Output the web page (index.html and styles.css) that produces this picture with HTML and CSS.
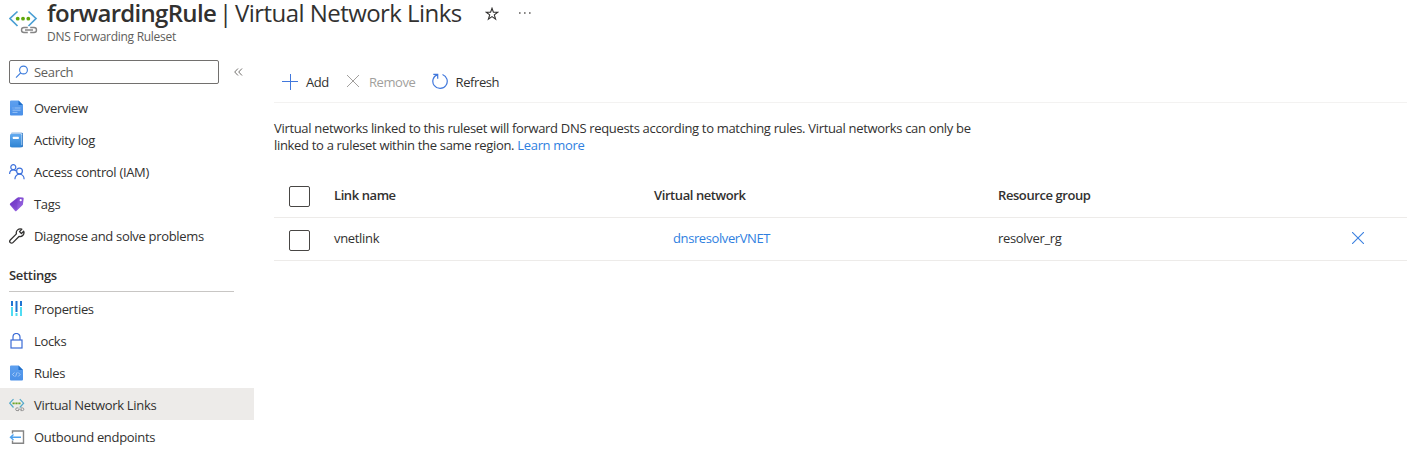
FILE: index.html
```html
<!DOCTYPE html>
<html lang="en">
<head>
<meta charset="utf-8">
<title>forwardingRule | Virtual Network Links</title>
<link rel="stylesheet" href="styles.css">
</head>
<body>
<svg class="defs" aria-hidden="true">
  <defs>
    <linearGradient id="blue" x1="0" y1="0" x2="0" y2="1"><stop offset="0" stop-color="#5ea0ef"/><stop offset="1" stop-color="#4a90e8"/></linearGradient>
    <linearGradient id="book" x1="0" y1="0" x2="0" y2="1"><stop offset="0" stop-color="#62aaf0"/><stop offset="1" stop-color="#2f84d3"/></linearGradient>
    <linearGradient id="purple" x1="0" y1="0" x2="1" y2="1"><stop offset="0" stop-color="#6a2fc4"/><stop offset="1" stop-color="#a272e6"/></linearGradient>
  </defs>
</svg>
<header class="header">
  <svg class="header-icon" width="30" height="26" viewBox="0 0 30 26" fill="none">
    <path d="M8.500 1.500 1 8.500 8.500 16M19.500 1.500l7.500 7-7.500 7.500" stroke="#4a9fd4" stroke-width="1.700"/>
    <g fill="#5ea70b"><circle cx="8.700" cy="8.700" r="1.900"/><circle cx="14" cy="8.700" r="1.900"/><circle cx="19.300" cy="8.700" r="1.900"/></g>
    <path d="M18.500 17.500H15a2.500 2.500 0 0 0 0 5h3.500M21.500 17.500H25a2.500 2.500 0 0 1 0 5h-3.500M16 20h8" stroke="#fff" stroke-width="3"/>
    <path d="M18.800 17.500H15a2.500 2.500 0 0 0 0 5h3.800M21.200 17.500H25a2.500 2.500 0 0 1 0 5h-3.800M16 20h8" stroke="#858585" stroke-width="1.400"/>
  </svg>
  <div class="heading">
    <h1 class="title"><span class="title-name">forwardingRule</span><span class="title-bar">|</span><span class="title-page">Virtual Network Links</span></h1>
    <p class="subtitle">DNS Forwarding Ruleset</p>
  </div>
  <svg class="star" width="14" height="14" viewBox="0 0 14 14" fill="none" stroke="#323130" stroke-width="1.100"><path d="M7 1.300 8.400 5.300h4.300L9.300 7.900l1.300 4.300L7 9.600l-3.600 2.600 1.300-4.300L1.300 5.300h4.300z"/></svg>
  <svg class="more" width="12" height="2" viewBox="0 0 12 2" fill="#605e5c"><path d="M0 .3h1.600v1.400H0zM5 .3h1.600v1.400H5zM10 .3h1.600v1.400H10z"/></svg>
</header>
<div class="layout">
  <aside class="sidebar">
    <div class="search-row">
      <div class="search">
        <svg width="14" height="14" viewBox="0 0 14 14" fill="none" stroke="#3b7bdc" stroke-width="1.100"><circle cx="8.500" cy="5" r="3.900"/><path d="M5.700 7.800 1 12.700"/></svg>
        <span>Search</span>
      </div>
      <svg class="collapse" width="9" height="8" viewBox="0 0 9 8" fill="none" stroke="#706e6c"><path d="M4 .5.700 4 4 7.500M8 .5 4.700 4 8 7.500"/></svg>
    </div>
    <nav class="nav">
      <a class="item"><svg width="16" height="16" viewBox="0 0 16 16"><path d="M1 1.500a1 1 0 0 1 1-1h7.500L14 5v9.500a1 1 0 0 1-1 1H2a1 1 0 0 1-1-1z" fill="url(#blue)"/><path d="M9.500.500V5H14z" fill="#1f6fc9"/><path d="M3.500 8h1M5.500 8h6M3.500 10.200h8M3.500 12.400h5" stroke="#a9cdf8" stroke-width=".8"/></svg><span>Overview</span></a>
      <a class="item"><svg width="16" height="16" viewBox="0 0 16 16"><path d="M2.500.7h10.300a1.300 1.300 0 0 1 1.200 1.300v12a1.300 1.300 0 0 1-1.200 1.300H2.500z" fill="#2c75c4"/><path d="M2.500 1.300h9.700a1 1 0 0 1 1 1v11H2.500z" fill="#d6e8fa"/><rect x="1" y="2" width="11.500" height="13.200" rx="1.300" fill="url(#book)"/><rect x="3.800" y="4.700" width="6" height="2.300" rx=".5" fill="#fff"/></svg><span>Activity log</span></a>
      <a class="item"><svg width="16" height="16" viewBox="0 0 16 16" fill="none" stroke="#3e72dc" stroke-width="1.200"><circle cx="4.300" cy="3.200" r="2.500"/><circle cx="10.500" cy="7" r="2.900"/><path d="M.6 10c0-2.500 1.400-4.100 3.700-4.100 1.200 0 2 .4 2.700 1.100M5.900 15.300c0-3 1.900-5.200 4.600-5.200s4.600 2.200 4.600 5.200"/></svg><span>Access control (IAM)</span></a>
      <a class="item"><svg width="16" height="16" viewBox="0 0 16 16"><path d="M9.200 1.300 1.200 7.500a1 1 0 0 0-.1 1.400l5 6a1 1 0 0 0 1.300.1l6.500-6.300.8-6.200a1 1 0 0 0-1-1z" fill="url(#purple)"/><path d="m8.500 1.300-7.300 6.200L7 14l1.200-1z" fill="#6e35c4" opacity=".35"/><circle cx="11.700" cy="4.200" r="1.100" fill="#fff"/></svg><span>Tags</span></a>
      <a class="item"><svg width="16" height="16" viewBox="0 0 16 16" fill="none" stroke="#323130" stroke-width="1.300" stroke-linejoin="round"><path d="M12.800 1.200a4 4 0 0 0-5.400 4.700L1.300 12a1.800 1.800 0 0 0 2.600 2.600L10 8.500a4 4 0 0 0 4.700-5.300l-2.300 2.300-1.900-1.900z"/></svg><span>Diagnose and solve problems</span></a>
      <h2 class="section">Settings</h2>
      <a class="item"><svg width="16" height="16" viewBox="0 0 16 16"><path d="M2 0h2v5H2zM6.500 0h2v11h-2zM11 0h2v5h-2z" fill="#1f74d2"/><path d="M2 6h2v9H2zM6.500 12h2v3h-2zM11 6h2v9h-2z" fill="#50dcf2"/></svg><span>Properties</span></a>
      <a class="item"><svg width="16" height="16" viewBox="0 0 16 16" fill="none" stroke="#3b6bd6" stroke-width="1.200"><rect x="2" y="7" width="11" height="8"/><path d="M4 7V4a3.500 3.500 0 0 1 7 0v3"/></svg><span>Locks</span></a>
      <a class="item"><svg width="16" height="16" viewBox="0 0 16 16"><path d="M1 1.500a1 1 0 0 1 1-1h7.500L14 5v9.500a1 1 0 0 1-1 1H2a1 1 0 0 1-1-1z" fill="url(#blue)"/><path d="M9.500.500V5H14z" fill="#1f6fc9"/><path d="M5.400 7.500 3.500 9.500l1.900 2M9.200 7.500l1.900 2-1.900 2M8 7.500l-1.400 4" fill="none" stroke="#b9d6fa" stroke-width=".8"/></svg><span>Rules</span></a>
      <a class="item item-selected"><svg width="16" height="16" viewBox="0 0 16 16" fill="none"><path d="M4.500 2.200.7 6.200l3.800 4.300M10.800 2.200l3.800 4-3.800 4.300" stroke="#51a8c9" stroke-width="1.200"/><path d="M3.500 6.300h8" stroke="#6aa524" stroke-width="1.700" stroke-dasharray="2.200 .7"/><path d="M9.300 10.900H8a1.300 1.300 0 0 0 0 2.700h2M12 10.900h1.500a1.300 1.300 0 0 1 0 2.700h-2M9 12.200h4" stroke="#8a8a8a" stroke-width=".9"/></svg><span>Virtual Network Links</span></a>
      <a class="item"><svg width="16" height="16" viewBox="0 0 16 16" fill="none"><path d="M3.500 4.500V2h11v12.300h-11v-2.800" stroke="#858585" stroke-width="1.400"/><path d="M12 8.200H1.500M4.500 5.500 1.500 8.200l3 2.700" stroke="#4ca0ee" stroke-width="1.400"/></svg><span>Outbound endpoints</span></a>
    </nav>
  </aside>
  <main class="main">
    <div class="toolbar">
      <button class="command"><svg width="16" height="16" viewBox="0 0 16 16" stroke="#4178dc"><path d="M8.500 0v16M0 7.500h16"/></svg><span>Add</span></button>
      <button class="command command-disabled"><svg width="16" height="16" viewBox="0 0 16 16" stroke="#a19f9d"><path d="m2 1 12 12M14 1 2 13"/></svg><span>Remove</span></button>
      <button class="command"><svg width="16" height="18" viewBox="0 0 16 18" fill="none" stroke="#4178dc" stroke-width="1.200"><path d="M10.500 1.500a7.200 7.200 0 1 1-5.200.1M1.300 1.300h4.400v4.400"/></svg><span>Refresh</span></button>
    </div>
    <p class="description">Virtual networks linked to this ruleset will forward DNS requests according to matching rules. Virtual networks can only be<br>linked to a ruleset within the same region. <a class="link">Learn more</a></p>
    <div class="table">
      <div class="row row-head"><i class="checkbox"></i><span>Link name</span><span>Virtual network</span><span>Resource group</span></div>
      <div class="row"><i class="checkbox"></i><span>vnetlink</span><a class="link network">dnsresolverVNET</a><span>resolver_rg</span>
        <svg class="remove" width="12" height="12" viewBox="0 0 12 12" stroke="#3b80e0" stroke-width="1.100"><path d="m0 0 12 12M12 0 0 12"/></svg></div>
    </div>
  </main>
</div>
</body>
</html>
```
FILE: styles.css
```css
* { box-sizing: border-box; }
body { margin: 0; height: 451px; overflow: hidden; background: #fff; color: #323130; font: 13px/18px "Open Sans", "Noto Sans", sans-serif; letter-spacing: -0.32px; }
h1, h2, p { margin: 0; }
svg { display: block; flex: none; }
.defs { position: absolute; width: 0; height: 0; }
.header { display: flex; align-items: flex-start; height: 60px; padding-left: 9px; }
.header-icon { margin: 10px 8px 0 0; }
.heading { width: 438px; white-space: nowrap; }
.title { display: flex; height: 28px; font-size: 24px; line-height: 26px; font-weight: 400; }
.title-name { width: 172px; font-weight: 600; letter-spacing: -0.7px; }
.title-bar { width: 16px; }
.title-page { letter-spacing: -0.55px; }
.subtitle { font-size: 12px; line-height: 18px; color: #605e5c; letter-spacing: -0.29px; }
.star { margin-top: 7px; }
.more { margin: 12px 0 0 20px; }
.layout { display: flex; }
.sidebar { width: 254px; flex: none; }
.search-row { display: flex; align-items: center; height: 31px; padding: 0 0 7px 9px; }
.search { display: flex; align-items: center; gap: 5px; width: 210px; height: 24px; padding-left: 5px; border: 1px solid #72706e; border-radius: 2px; color: #605e5c; }
.collapse { margin-left: 15px; }
.item { display: flex; align-items: center; gap: 9px; height: 32px; padding: 2px 0 0 9px; white-space: nowrap; }
.item-selected { background: #edebe9; }
.section { width: 225px; height: 41px; margin-left: 9px; padding-top: 15px; border-bottom: 1px solid #c8c6c4; font-size: 13px; line-height: 18px; font-weight: 600; }
.main { flex: 1; padding-left: 20px; }
.toolbar { display: flex; height: 43px; padding-left: 8px; border-bottom: 1px solid #f3f2f1; }
.command { display: flex; align-items: center; gap: 8px; height: 44px; margin-right: 16px; padding: 0; border: 0; background: none; color: #323130; font: inherit; letter-spacing: -0.4px; }
.command-disabled { color: #a19f9d; }
.description { height: 71px; padding-top: 17px; line-height: 17px; white-space: nowrap; }
.link { color: #2f7fdf; }
.row { display: grid; grid-template-columns: 60px 320px 344px 354px 12px; align-items: center; height: 43px; padding-bottom: 2px; border-bottom: 1px solid #edebe9; }
.row-head { height: 44px; font-weight: 600; letter-spacing: -0.42px; }
.checkbox { width: 21px; height: 21px; margin: 4px 0 0 15px; border: 1px solid #484644; border-radius: 2px; }
.network { padding-left: 19px; letter-spacing: -0.4px; }
```
